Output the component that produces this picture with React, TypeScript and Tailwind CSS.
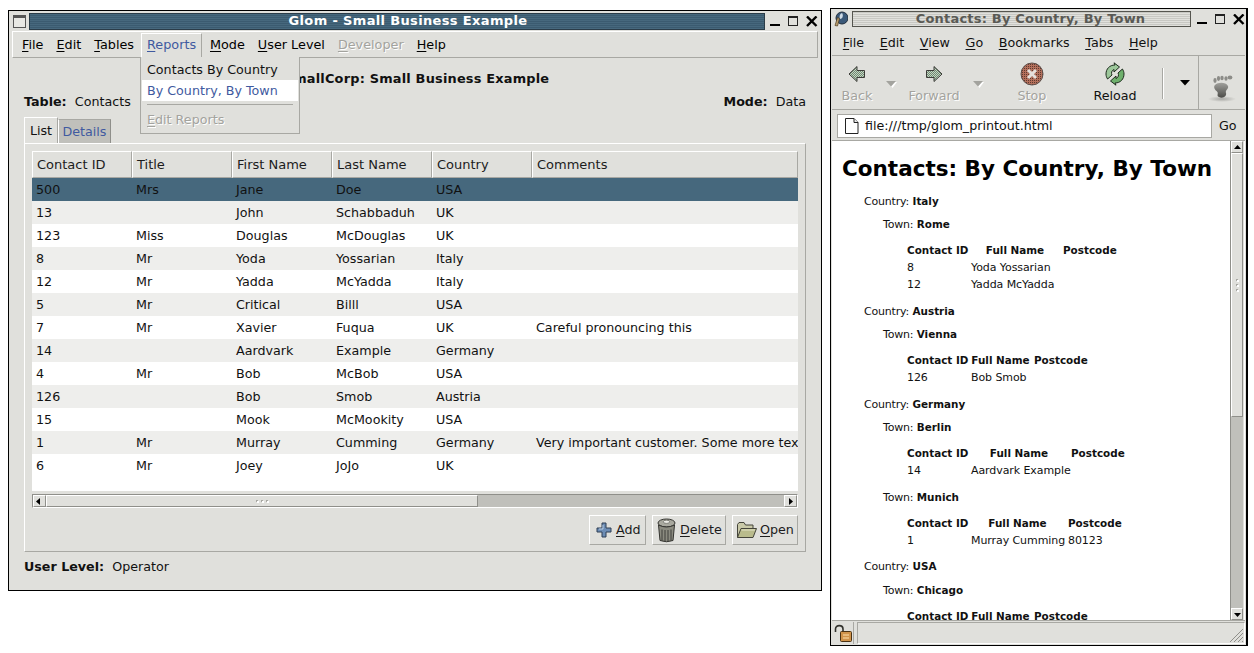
import * as React from "react"

// ==================== DATA ====================

const columns = [
  { title: "Contact ID", width: "w-[100px]" },
  { title: "Title", width: "w-[100px]" },
  { title: "First Name", width: "w-[100px]" },
  { title: "Last Name", width: "w-[100px]" },
  { title: "Country", width: "w-[100px]" },
  { title: "Comments", width: "flex-1" },
]

const rows = [
  ["500", "Mrs", "Jane", "Doe", "USA", ""],
  ["13", "", "John", "Schabbaduh", "UK", ""],
  ["123", "Miss", "Douglas", "McDouglas", "UK", ""],
  ["8", "Mr", "Yoda", "Yossarian", "Italy", ""],
  ["12", "Mr", "Yadda", "McYadda", "Italy", ""],
  ["5", "Mr", "Critical", "Billl", "USA", ""],
  ["7", "Mr", "Xavier", "Fuqua", "UK", "Careful pronouncing this"],
  ["14", "", "Aardvark", "Example", "Germany", ""],
  ["4", "Mr", "Bob", "McBob", "USA", ""],
  ["126", "", "Bob", "Smob", "Austria", ""],
  ["15", "", "Mook", "McMookity", "USA", ""],
  ["1", "Mr", "Murray", "Cumming", "Germany", "Very important customer. Some more text here"],
  ["6", "Mr", "Joey", "JoJo", "UK", ""],
]

// ==================== SMALL PIECES ====================

const Mnemonic: React.FC<{ label: string; at?: number }> = ({ label, at = 0 }) => (
  <span>
    {label.slice(0, at)}
    <span className="underline underline-offset-2 decoration-1">{label[at]}</span>
    {label.slice(at + 1)}
  </span>
)

const WindowButtons: React.FC = () => (
  <div className="flex items-center gap-[6px] text-black">
    <svg width="12" height="12" viewBox="0 0 12 12">
      <rect x="0" y="8" width="10" height="2" fill="#000" />
    </svg>
    <svg width="12" height="12" viewBox="0 0 12 12">
      <rect x="0.5" y="0.5" width="9" height="9" fill="none" stroke="#222" />
      <rect x="0" y="0" width="10" height="2" fill="#222" />
    </svg>
    <svg width="12" height="12" viewBox="0 0 12 12">
      <path d="M1 0.5 L10.5 10 M10.5 0.5 L1 10" stroke="#000" strokeWidth="2.4" />
    </svg>
  </div>
)

const Arrow: React.FC<{ dir: "left" | "right" | "up" | "down"; color?: string }> = ({ dir, color = "#000" }) => {
  const points = {
    left: "5,1 5,8 1,4.5",
    right: "3,1 3,8 7,4.5",
    up: "1,6 8,6 4.5,2",
    down: "1,3 8,3 4.5,7",
  }[dir]
  return (
    <svg width="9" height="9" viewBox="0 0 9 9">
      <polygon points={points} fill={color} />
    </svg>
  )
}

const Chevron: React.FC<{ color: string; shadow?: boolean }> = ({ color, shadow }) => (
  <svg width="11" height="7" viewBox="0 0 11 7">
    {shadow && <polygon points="2,1 11,1 6.5,7" fill="#fff" />}
    <polygon points="0,0 10,0 5,5.5" fill={color} />
  </svg>
)

const ScrollButton: React.FC<{ dir: "left" | "right" | "up" | "down"; className: string }> = ({ dir, className }) => (
  <div className={`flex items-center justify-center bg-[#e0e0dc] border border-t-white border-l-white border-r-[#8f8f8a] border-b-[#8f8f8a] ${className}`}>
    <Arrow dir={dir} />
  </div>
)

const Grip: React.FC<{ vertical?: boolean }> = ({ vertical }) => (
  <svg width={vertical ? 3 : 13} height={vertical ? 13 : 3} viewBox={vertical ? "0 0 3 13" : "0 0 13 3"}>
    {[0, 5, 10].map((p) => (
      <g key={p}>
        <rect x={vertical ? 0 : p} y={vertical ? p : 0} width="2" height="2" fill="#a8a8a3" />
        <rect x={vertical ? 1 : p + 1} y={vertical ? p + 1 : 1} width="2" height="2" fill="#fff" />
      </g>
    ))}
  </svg>
)

// ==================== ICONS ====================

const AddIcon = () => (
  <svg width="16" height="16" viewBox="0 0 16 16">
    <path d="M6 1h4v5h5v4h-5v5H6v-5H1V6h5z" fill="#6d8db5" stroke="#2f3f55" strokeWidth="1" strokeLinejoin="round" />
    <path d="M7 3v4H3" fill="none" stroke="#b8cde4" strokeWidth="1" />
  </svg>
)

const TrashIcon = () => (
  <svg width="19" height="26" viewBox="0 0 19 26">
    <ellipse cx="9.5" cy="6" rx="8.5" ry="4" fill="#a9a99f" stroke="#33332f" />
    <ellipse cx="9.5" cy="4.8" rx="3.2" ry="1.6" fill="#ecece6" stroke="#55554f" strokeWidth="0.6" />
    <path d="M1.5 8 L3 23.5 Q9.5 26 16 23.5 L17.5 8 Q9.5 12 1.5 8z" fill="#8b8b80" stroke="#33332f" />
    <path d="M5 12.5v11M8 13v12M11 13v12M14 12.5v11" stroke="#3f3f3a" strokeWidth="1" />
  </svg>
)

const FolderIcon = () => (
  <svg width="20" height="17" viewBox="0 0 20 17">
    <path d="M0.5 15.5V2.5L2 0.5h5L8.5 3H16v4" fill="#c9c9a8" stroke="#44443a" />
    <path d="M0.5 15.5 L4 6.5h15.5l-3.5 9z" fill="#b9bb8c" stroke="#44443a" strokeLinejoin="round" />
    <path d="M4.5 8h13.5" stroke="#e4e4c8" />
  </svg>
)

const NavArrow: React.FC<{ flip?: boolean }> = ({ flip }) => (
  <svg width="18" height="18" viewBox="0 0 18 18" className={flip ? "-scale-x-100" : ""}>
    <defs>
      <pattern id="navhatch" width="2" height="2" patternUnits="userSpaceOnUse">
        <rect width="2" height="2" fill="#c4d4c4" />
        <rect width="1" height="1" fill="#6f8a70" />
        <rect x="1" y="1" width="1" height="1" fill="#6f8a70" />
      </pattern>
    </defs>
    <path d="M1 9 L9 1.5 V5.5 H16.5 V12.5 H9 V16.5z" fill="url(#navhatch)" stroke="#3c3c38" strokeLinejoin="round" />
  </svg>
)

const StopIcon = () => (
  <svg width="24" height="24" viewBox="0 0 24 24">
    <defs>
      <pattern id="stophatch" width="2" height="2" patternUnits="userSpaceOnUse">
        <rect width="2" height="2" fill="#b4705c" />
        <rect width="1" height="1" fill="#5f3a30" />
      </pattern>
    </defs>
    <circle cx="12" cy="12" r="11" fill="url(#stophatch)" stroke="#5e504c" />
    <path d="M8 8l8 8M16 8l-8 8" stroke="#e6e0dc" strokeWidth="3" />
  </svg>
)

const ReloadIcon = () => (
  <svg width="24" height="24" viewBox="0 0 24 24">
    <path d="M12 3 C6.5 3 3 7 3 12 C3 14 3.6 15.5 4.6 17 L9 13 C8 11 8.5 8.5 11 7.5 L11 10 L16.5 5 L11 0.8 Z" fill="#9cc79a" stroke="#1d2b1d" strokeLinejoin="round" />
    <path d="M12 21 C17.5 21 21 17 21 12 C21 10 20.4 8.5 19.4 7 L15 11 C16 13 15.5 15.5 13 16.5 L13 14 L7.5 19 L13 23.2 Z" fill="#6eb06c" stroke="#1d2b1d" strokeLinejoin="round" />
  </svg>
)

const FootIcon = () => (
  <svg width="30" height="32" viewBox="0 0 30 32">
    <defs>
      <linearGradient id="footfill" x1="0" y1="0" x2="0" y2="1">
        <stop offset="0" stopColor="#a0a09c" />
        <stop offset="1" stopColor="#4c4c48" />
      </linearGradient>
      <radialGradient id="footshadow">
        <stop offset="0" stopColor="#a8a8a4" />
        <stop offset="1" stopColor="#e0e0dc" />
      </radialGradient>
    </defs>
    <ellipse cx="15" cy="26" rx="14" ry="3" fill="url(#footshadow)" />
    <path d="M8 12 C11 9 19 9 21 13 C22 16 18 17 19 20 C20 23 16 26 12 24 C9 23 12 20 10 18.5 C8 17 6 14 8 12z" fill="url(#footfill)" />
    <ellipse cx="8" cy="7.5" rx="1.6" ry="2.4" fill="#8c8c88" />
    <ellipse cx="11.5" cy="5.5" rx="1.6" ry="2.4" fill="#8c8c88" />
    <ellipse cx="15" cy="5" rx="1.7" ry="2.3" fill="#8c8c88" />
    <ellipse cx="19" cy="5.5" rx="1.6" ry="2.2" fill="#8c8c88" />
    <ellipse cx="23" cy="4.5" rx="2.4" ry="2" fill="#8c8c88" />
  </svg>
)

const PageIcon = () => (
  <svg width="16" height="18" viewBox="0 0 16 18">
    <path d="M1.5 1.5h8.5l4 4v11h-12.5z" fill="#fff" stroke="#222" strokeLinejoin="round" />
    <path d="M10 1.5v4h4" fill="#eee" stroke="#222" />
  </svg>
)

const LockIcon = () => (
  <svg width="18" height="18" viewBox="0 0 18 18">
    <path d="M1.5 8 V5 C1.5 0.5 9 0.5 9 5 V8" fill="none" stroke="#33332e" strokeWidth="1.6" />
    <rect x="6.5" y="7.5" width="11" height="10" rx="1" fill="#d0934a" stroke="#4a3214" />
    <path d="M9 11h6M9 14h6" stroke="#f0c88c" strokeWidth="1.4" />
  </svg>
)

const GlobeIcon = () => (
  <svg width="14" height="16" viewBox="0 0 14 16">
    <circle cx="8" cy="7" r="6" fill="#3a5878" stroke="#1e2c3c" />
    <path d="M8 2 C5.5 3 5 6 6 8 C8 8 10 5 8 2z" fill="#cfdbe6" />
    <path d="M1 14.5 L3.5 6.5 L5.5 7.5 L3.5 15z" fill="#b89c6c" stroke="#4a3a20" strokeWidth="0.7" />
  </svg>
)

// ==================== GLOM WINDOW ====================

const menuItems: { label: string; disabled?: boolean; active?: boolean }[] = [
  { label: "File" },
  { label: "Edit" },
  { label: "Tables" },
  { label: "Reports", active: true },
  { label: "Mode" },
  { label: "User Level" },
  { label: "Developer", disabled: true },
  { label: "Help" },
]

const GlomWindow: React.FC = () => (
  <div className="relative mt-[10px] flex h-[581px] w-[814px] shrink-0 flex-col border border-black bg-[#e0e0dc] px-[3px] pb-[2px]">
    {/* Title bar */}
    <div className="flex h-[20px] shrink-0 items-center">
      <div className="ml-[1px] mr-[3px] h-[13px] w-[13px] border border-[#555] border-t-[3px] bg-[#e8e8e4]" />
      <div className="flex h-[17px] flex-1 items-center justify-center border border-[#2a3c48] bg-[#46687d] bg-[repeating-linear-gradient(0deg,#46687d_0px,#46687d_1px,#3b5b70_1px,#3b5b70_2px)] pl-[22px] text-[13px] font-bold tracking-[0.35px] text-white">
        Glom - Small Business Example
      </div>
      <div className="ml-[5px] flex pt-[1px]">
        <WindowButtons />
      </div>
    </div>

    {/* Menu bar */}
    <div className="flex h-[27px] shrink-0 items-center border border-t-white border-l-white border-r-[#a8a8a3] border-b-[#a8a8a3] pl-[3px] text-[12.8px]">
      {menuItems.map((item) => (
        <div
          key={item.label}
          className={
            item.active
              ? "mr-[2px] flex h-[24px] w-[61px] items-center border border-b-0 border-t-white border-l-white border-r-[#a8a8a3] pl-[5px] text-[#3f5aa0]"
              : item.disabled
                ? "mr-[1px] px-[6px] text-[#a3a39e] [text-shadow:1px_1px_0_#fff]"
                : "mr-[1px] px-[6px] text-black"
          }
        >
          <Mnemonic label={item.label} />
        </div>
      ))}
    </div>

    {/* Reports menu */}
    <div className="absolute left-[131px] top-[46px] z-10 flex h-[77px] w-[160px] flex-col border border-t-0 border-[#a8a8a3] bg-[#e0e0dc] px-[1px] text-[12.7px]">
      <div className="flex h-[23px] shrink-0 items-center px-[5px] pt-[2px]">Contacts By Country</div>
      <div className="flex h-[21px] shrink-0 items-center bg-white px-[5px] text-[#3f5aa0]">By Country, By Town</div>
      <div className="mx-[5px] mt-[3px] h-[2px] shrink-0 border-t border-[#a8a8a3]" />
      <div className="mt-[4px] px-[5px] text-[#a3a39e] [text-shadow:1px_1px_0_#fff]">
        <Mnemonic label="Edit Reports" />
      </div>
    </div>

    {/* Body */}
    <div className="flex flex-1 flex-col px-[12px]">
      <div className="mt-[12px] h-[18px] pl-[3px] text-center text-[12.9px] font-bold leading-[18px] tracking-[0.2px]">
        SmallCorp: Small Business Example
      </div>
      <div className="mt-[5px] flex h-[18px] items-center justify-between text-[12.7px]">
        <div>
          <span className="font-bold">Table:</span> &nbsp;Contacts
        </div>
        <div>
          <span className="font-bold">Mode:</span> &nbsp;Data
        </div>
      </div>

      {/* Tabs */}
      <div className="mt-[6px] flex h-[27px] shrink-0 items-end text-[12.7px]">
        <div className="flex h-[27px] w-[34px] items-center justify-center border border-b-0 border-t-white border-l-white border-r-[#a8a8a3] pb-[1px]">List</div>
        <div className="flex h-[25px] w-[53px] items-center justify-center border border-b-0 border-t-[#a8a8a3] border-l-white border-r-[#8f8f8a] bg-[#c0c0bb] text-[#3f5aa0]">Details</div>
      </div>

      {/* Notebook page */}
      <div className="-mt-px flex h-[409px] shrink-0 flex-col border border-t-white border-l-white border-r-[#a8a8a3] border-b-[#a8a8a3] p-[7px]">
        {/* List */}
        <div className="flex h-[27px] shrink-0 text-[13px] text-[#1c1c1c]">
          {columns.map((c) => (
            <div key={c.title} className={`flex items-center border border-t-white border-l-white border-r-[#a8a8a3] border-b-[#a8a8a3] pl-[4px] ${c.width}`}>
              {c.title}
            </div>
          ))}
        </div>
        <div className="flex h-[313px] shrink-0 flex-col bg-white text-[12.7px]">
          {rows.map((row, i) => (
            <div
              key={row[0]}
              className={`flex h-[23px] shrink-0 items-center overflow-hidden whitespace-nowrap text-[#111] ${
                i === 0 ? "bg-[#46687d]" : i % 2 === 1 ? "bg-[#eeeeec]" : "bg-white"
              }`}
            >
              {columns.map((c, j) => (
                <div key={c.title} className={`overflow-hidden pl-[4px] ${c.width}`}>
                  {row[j]}
                </div>
              ))}
            </div>
          ))}
        </div>
        <div className="mt-[3px] flex h-[14px] shrink-0 items-center border border-t-[#8f8f8a] border-l-[#8f8f8a] border-r-white border-b-white bg-[#c0c0bb]">
          <ScrollButton dir="left" className="h-[12px] w-[13px] shrink-0" />
          <div className="flex h-[12px] w-[432px] shrink-0 items-center justify-center border border-t-white border-l-white border-r-[#8f8f8a] border-b-[#8f8f8a] bg-[#e0e0dc]">
            <Grip />
          </div>
          <div className="flex-1" />
          <ScrollButton dir="right" className="h-[12px] w-[13px] shrink-0" />
        </div>
        {/* Buttons */}
        <div className="mt-[7px] flex h-[30px] shrink-0 justify-end gap-[6px] text-[12.7px] text-[#1c1c1c]">
          <div className="flex w-[57px] items-center gap-[4px] border border-t-white border-l-white border-r-[#a8a8a3] border-b-[#a8a8a3] pl-[6px]">
            <AddIcon />
            <Mnemonic label="Add" />
          </div>
          <div className="flex w-[74px] items-center gap-[4px] border border-t-white border-l-white border-r-[#a8a8a3] border-b-[#a8a8a3] pl-[4px]">
            <TrashIcon />
            <Mnemonic label="Delete" />
          </div>
          <div className="flex w-[66px] items-center gap-[3px] border border-t-white border-l-white border-r-[#a8a8a3] border-b-[#a8a8a3] pl-[4px]">
            <FolderIcon />
            <Mnemonic label="Open" />
          </div>
        </div>
      </div>

      <div className="mt-[6px] flex h-[18px] items-center text-[12.7px]">
        <span className="font-bold">User Level:</span>&nbsp; Operator
      </div>
    </div>
  </div>
)

// ==================== BROWSER WINDOW ====================

const ReportLine: React.FC<{ label: string; value: string; className: string }> = ({ label, value, className }) => (
  <div className={`h-[15px] leading-[15px] ${className}`}>
    <span className="tracking-[-0.2px]">{label}:</span> <span className="text-[10.4px] font-bold">{value}</span>
  </div>
)

const ReportTable: React.FC<{ rows: string[][]; tableWidth: string; nameWidth: string }> = ({ rows, tableWidth, nameWidth }) => (
  <table className={`ml-[71px] mt-[9px] table-fixed border-separate border-spacing-x-[4px] border-spacing-y-[2px] ${tableWidth}`}>
    <thead>
      <tr>
        <th className="h-[15px] w-[60px] whitespace-nowrap p-0 text-center text-[10.4px] font-bold leading-[15px]">Contact ID</th>
        <th className={`h-[15px] whitespace-nowrap p-0 text-center text-[10.4px] font-bold leading-[15px] ${nameWidth}`}>Full Name</th>
        <th className="h-[15px] w-[53px] whitespace-nowrap p-0 text-center text-[10.4px] font-bold leading-[15px]">Postcode</th>
      </tr>
    </thead>
    <tbody>
      {rows.map((r) => (
        <tr key={r[0]}>
          {r.map((cell, i) => (
            <td key={i} className="h-[15px] whitespace-nowrap p-0 text-left leading-[15px] tracking-[-0.08px]">
              {cell}
            </td>
          ))}
        </tr>
      ))}
    </tbody>
  </table>
)

const browserMenu = ["File", "Edit", "View", "Go", "Bookmarks", "Tabs", "Help"]

const BrowserWindow: React.FC = () => (
  <div className="mt-[8px] flex h-[638px] w-[418px] shrink-0 flex-col border border-r-2 border-black bg-[#e0e0dc] px-[1px] pb-[1px]">
    {/* Title bar */}
    <div className="flex h-[20px] shrink-0 items-center">
      <div className="ml-[2px] mr-[4px] flex">
        <GlobeIcon />
      </div>
      <div className="flex h-[16px] flex-1 items-center justify-center border border-[#55554f] bg-[repeating-linear-gradient(0deg,#e0e0dc_0px,#e0e0dc_1px,#c8c8c3_1px,#c8c8c3_2px)] pl-[18px] text-[13px] font-bold tracking-[0.2px] text-[#5a5a55]">
        Contacts: By Country, By Town
      </div>
      <div className="ml-[6px] flex pt-[1px]">
        <WindowButtons />
      </div>
    </div>

    {/* Menu bar */}
    <div className="flex h-[27px] shrink-0 items-center border-b border-[#a8a8a3] pl-[3px] pt-[2px] text-[12.7px]">
      {browserMenu.map((m) => (
        <div key={m} className="px-[7.8px]">
          <Mnemonic label={m} />
        </div>
      ))}
    </div>

    {/* Toolbar */}
    <div className="flex h-[54px] shrink-0 border-b border-[#a8a8a3] text-[12.7px]">
      <div className="flex flex-1 items-start border-r border-[#a8a8a3] pt-[6px]">
        <div className="flex w-[50px] flex-col items-center text-[#a3a39e] [text-shadow:1px_1px_0_#fff]">
          <div className="flex h-[24px] items-center">
            <NavArrow />
          </div>
          <div>Back</div>
        </div>
        <div className="ml-[3px] mr-[2px] mt-[19px] flex w-[12px] justify-center">
          <Chevron color="#a3a39e" shadow />
        </div>
        <div className="flex w-[70px] flex-col items-center text-[#a3a39e] [text-shadow:1px_1px_0_#fff]">
          <div className="flex h-[24px] items-center">
            <NavArrow flip />
          </div>
          <div>Forward</div>
        </div>
        <div className="ml-[3px] mt-[19px] flex w-[12px] justify-center">
          <Chevron color="#a3a39e" shadow />
        </div>
        <div className="ml-[13px] flex w-[70px] flex-col items-center text-[#a3a39e] [text-shadow:1px_1px_0_#fff]">
          <div className="flex h-[24px] items-center">
            <StopIcon />
          </div>
          <div>Stop</div>
        </div>
        <div className="ml-[13px] flex w-[70px] flex-col items-center">
          <div className="flex h-[24px] items-center">
            <ReloadIcon />
          </div>
          <div>Reload</div>
        </div>
        <div className="ml-[12px] mt-[6px] h-[31px] w-[2px] border-l border-r border-l-[#a8a8a3] border-r-white" />
        <div className="ml-[16px] mt-[18px] flex">
          <Chevron color="#000" />
        </div>
      </div>
      <div className="flex w-[46px] items-start justify-center pt-[17px]">
        <FootIcon />
      </div>
    </div>

    {/* Address bar */}
    <div className="flex h-[31px] shrink-0 items-center border-b border-[#a8a8a3] pt-[2px] text-[12.7px]">
      <div className="ml-[5px] flex h-[24px] w-[375px] items-center border border-[#a8a8a3] bg-white pl-[6px]">
        <PageIcon />
        <span className="ml-[5px]">file:///tmp/glom_printout.html</span>
      </div>
      <div className="ml-[7px]">Go</div>
    </div>

    {/* Page */}
    <div className="flex min-h-0 flex-1">
      <div className="min-w-0 flex-1 overflow-hidden bg-white text-[11px] text-[#111]">
        <h1 className="ml-[10px] mt-[13px] h-[30px] whitespace-nowrap text-[21.5px] font-bold leading-[30px] text-black">
          Contacts: By Country, By Town
        </h1>
        <ReportLine label="Country" value="Italy" className="ml-[32px] mt-[10px]" />
        <ReportLine label="Town" value="Rome" className="ml-[51px] mt-[8px]" />
        <ReportTable tableWidth="w-[217px]" nameWidth="w-[88px]" rows={[["8", "Yoda Yossarian", ""], ["12", "Yadda McYadda", ""]]} />
        <ReportLine label="Country" value="Austria" className="ml-[32px] mt-[10px]" />
        <ReportLine label="Town" value="Vienna" className="ml-[51px] mt-[8px]" />
        <ReportTable tableWidth="w-[188px]" nameWidth="w-[59px]" rows={[["126", "Bob Smob", ""]]} />
        <ReportLine label="Country" value="Germany" className="ml-[32px] mt-[10px]" />
        <ReportLine label="Town" value="Berlin" className="ml-[51px] mt-[8px]" />
        <ReportTable tableWidth="w-[225px]" nameWidth="w-[96px]" rows={[["14", "Aardvark Example", ""]]} />
        <ReportLine label="Town" value="Munich" className="ml-[51px] mt-[10px]" />
        <ReportTable tableWidth="w-[222px]" nameWidth="w-[93px]" rows={[["1", "Murray Cumming", "80123"]]} />
        <ReportLine label="Country" value="USA" className="ml-[32px] mt-[9px]" />
        <ReportLine label="Town" value="Chicago" className="ml-[51px] mt-[9px]" />
        <ReportTable tableWidth="w-[188px]" nameWidth="w-[59px]" rows={[]} />
      </div>

      {/* Scrollbar */}
      <div className="flex w-[15px] shrink-0 border-r border-white">
        <div className="flex w-[13px] shrink-0 flex-col border-l border-[#8f8f8a] bg-[#c0c0bb]">
          <ScrollButton dir="up" className="h-[12px] w-[12px] shrink-0" />
          <div className="flex h-[264px] w-[12px] shrink-0 items-center justify-center border border-t-white border-l-white border-r-[#8f8f8a] border-b-[#8f8f8a] bg-[#e0e0dc]">
            <Grip vertical />
          </div>
          <div className="flex-1" />
          <ScrollButton dir="down" className="h-[12px] w-[12px] shrink-0" />
        </div>
      </div>
    </div>

    {/* Status bar */}
    <div className="flex h-[24px] shrink-0 gap-[3px] border-t border-[#a8a8a3] pt-[1px]">
      <div className="flex w-[22px] items-center justify-center border-r border-[#a8a8a3]">
        <LockIcon />
      </div>
      <div className="flex flex-1 items-end justify-end border border-t-[#a8a8a3] border-l-[#a8a8a3] border-r-white border-b-white">
        <svg width="16" height="16" viewBox="0 0 16 16">
          <path d="M2 15 L15 2 M6 15 L15 6 M10 15 L15 10 M14 15 L15 14" stroke="#8f8f8a" strokeWidth="1" />
        </svg>
      </div>
    </div>
  </div>
)

// ==================== APP ROOT ====================

const App: React.FC = () => (
  <div className="flex h-[653px] w-[1254px] items-start gap-[8px] overflow-hidden bg-white pl-[8px] font-['DejaVu_Sans',sans-serif] text-[#111]">
    <GlomWindow />
    <BrowserWindow />
  </div>
)

export default App
